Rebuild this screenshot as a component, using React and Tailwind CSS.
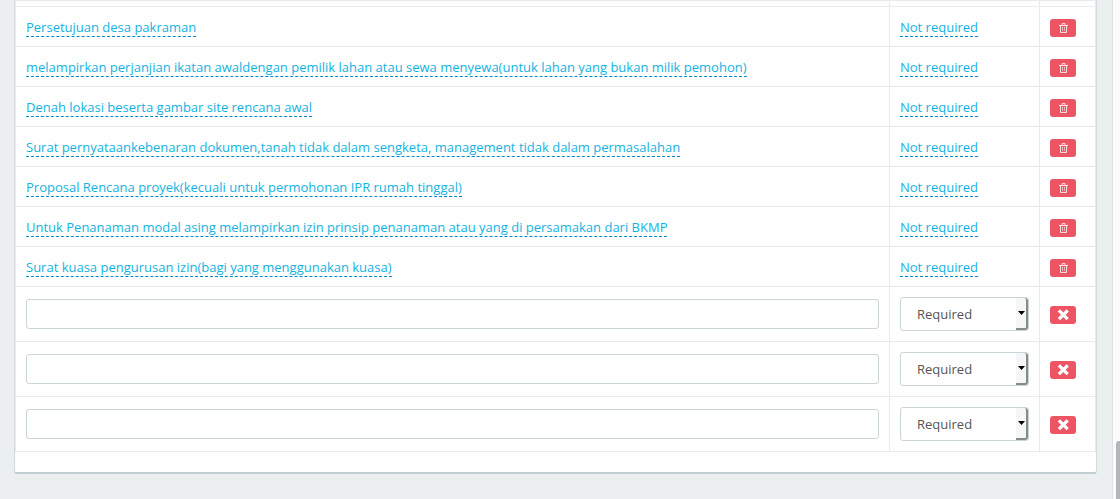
const documents = [
  'Persetujuan desa pakraman',
  'melampirkan perjanjian ikatan awaldengan pemilik lahan atau sewa menyewa(untuk lahan yang bukan milik pemohon)',
  'Denah lokasi beserta gambar site rencana awal',
  'Surat pernyataankebenaran dokumen,tanah tidak dalam sengketa, management tidak dalam permasalahan',
  'Proposal Rencana proyek(kecuali untuk permohonan IPR rumah tinggal)',
  'Untuk Penanaman modal asing melampirkan izin prinsip penanaman atau yang di persamakan dari BKMP',
  'Surat kuasa pengurusan izin(bagi yang menggunakan kuasa)',
];

const newRows = [1, 2, 3];

function TrashIcon() {
  return (
    <svg viewBox="0 0 10 10" className="h-[10px] w-[10px]" fill="none" stroke="#fff" strokeWidth="1" aria-hidden="true">
      <path d="M1 2.5h9" strokeOpacity=".85" />
      <path d="M4 1.9V.6h3v1.3" strokeOpacity=".75" />
      <path d="M2.5 3v6.5h6V3" strokeOpacity=".8" />
      <path d="M4.5 4v4M6.5 4v4" strokeOpacity=".55" />
    </svg>
  );
}

function CrossIcon() {
  return (
    <svg viewBox="0 0 12 12" className="h-3 w-3" stroke="#fff" strokeWidth="3.3" aria-hidden="true">
      <path d="M1.9 1.4l8.8 8.8M10.7 1.4l-8.8 8.8" />
    </svg>
  );
}

function EditableLink({ children }) {
  return (
    <a href="#edit" className="inline-block border-b border-dashed border-[#0088cc] leading-[18px] text-[#12b3e3]">
      {children}
    </a>
  );
}

function IconButton({ label, children }) {
  return (
    <button type="button" aria-label={label} className="flex h-[18px] w-[26px] items-center justify-center rounded-[3px] bg-[#ed5565]">
      {children}
    </button>
  );
}

function RequirementSelect({ row }) {
  return (
    <div className="relative">
      <select
        aria-label={`Status ${row}`}
        defaultValue="required"
        className="block h-[34px] w-full appearance-none rounded-[3px] border border-[#cbd5d5] bg-white pt-0.5 pl-4 text-[13px] text-[#555]"
      >
        <option value="required">Required</option>
        <option value="optional">Not required</option>
      </select>
      <span className="pointer-events-none absolute inset-y-px right-px flex w-3 items-center justify-center rounded-r-[3px] border-r-2 border-b-2 border-[#858a8a] bg-[#f5f6f7]">
        <svg viewBox="0 0 7 4" className="h-1 w-[7px]" aria-hidden="true">
          <path d="M0 0h7L3.5 4z" fill="#000" />
        </svg>
      </span>
    </div>
  );
}

export default function App() {
  return (
    <div className="flex min-h-screen bg-[#ebefef] font-['Open_Sans','Noto_Sans',sans-serif] text-[13px]">
      <main className="min-w-0 flex-1 pr-[15px] pb-[25px] pl-[14px]">
        <section className="rounded-b-[3px] border-x border-b-2 border-x-[#cfdbdd] border-b-[#bfcfd1] bg-white pb-5">
          <table className="w-full table-fixed border-separate border-spacing-0 border-t border-l border-[#e7ebee]">
            <colgroup>
              <col />
              <col className="w-[150px]" />
              <col className="w-[56px]" />
            </colgroup>
            <tbody className="[&_td]:border-r [&_td]:border-b [&_td]:border-[#e7ebec] [&_td]:p-0 [&_td]:align-top">
              <tr className="h-1.5">
                <td />
                <td />
                <td />
              </tr>
              {documents.map((name) => (
                <tr key={name} className="h-10">
                  <td>
                    <div className="px-[10px] pt-[11px]">
                      <EditableLink>{name}</EditableLink>
                    </div>
                  </td>
                  <td>
                    <div className="px-[10px] pt-[11px]">
                      <EditableLink>Not required</EditableLink>
                    </div>
                  </td>
                  <td>
                    <div className="px-[10px] pt-3">
                      <IconButton label={`Hapus ${name}`}>
                        <TrashIcon />
                      </IconButton>
                    </div>
                  </td>
                </tr>
              ))}
              {newRows.map((row) => (
                <tr key={row} className="h-[55px]">
                  <td>
                    <div className="px-[10px] pt-3">
                      <input
                        type="text"
                        aria-label={`Nama persyaratan ${row}`}
                        className="block h-[30px] w-full rounded-[3px] border border-[#cbd5d5] bg-white px-3"
                      />
                    </div>
                  </td>
                  <td>
                    <div className="px-[10px] pt-[10px]">
                      <RequirementSelect row={row} />
                    </div>
                  </td>
                  <td>
                    <div className="px-[10px] pt-[19px]">
                      <IconButton label={`Batal ${row}`}>
                        <CrossIcon />
                      </IconButton>
                    </div>
                  </td>
                </tr>
              ))}
            </tbody>
          </table>
        </section>
      </main>
      <div className="flex w-2 flex-col items-end justify-end border-l border-[#dde1e3] bg-[#fbfbfb]" aria-hidden="true">
        <div className="h-[58px] w-1 rounded-tl-[3px] bg-[#b4b5bb]" />
      </div>
    </div>
  );
}
